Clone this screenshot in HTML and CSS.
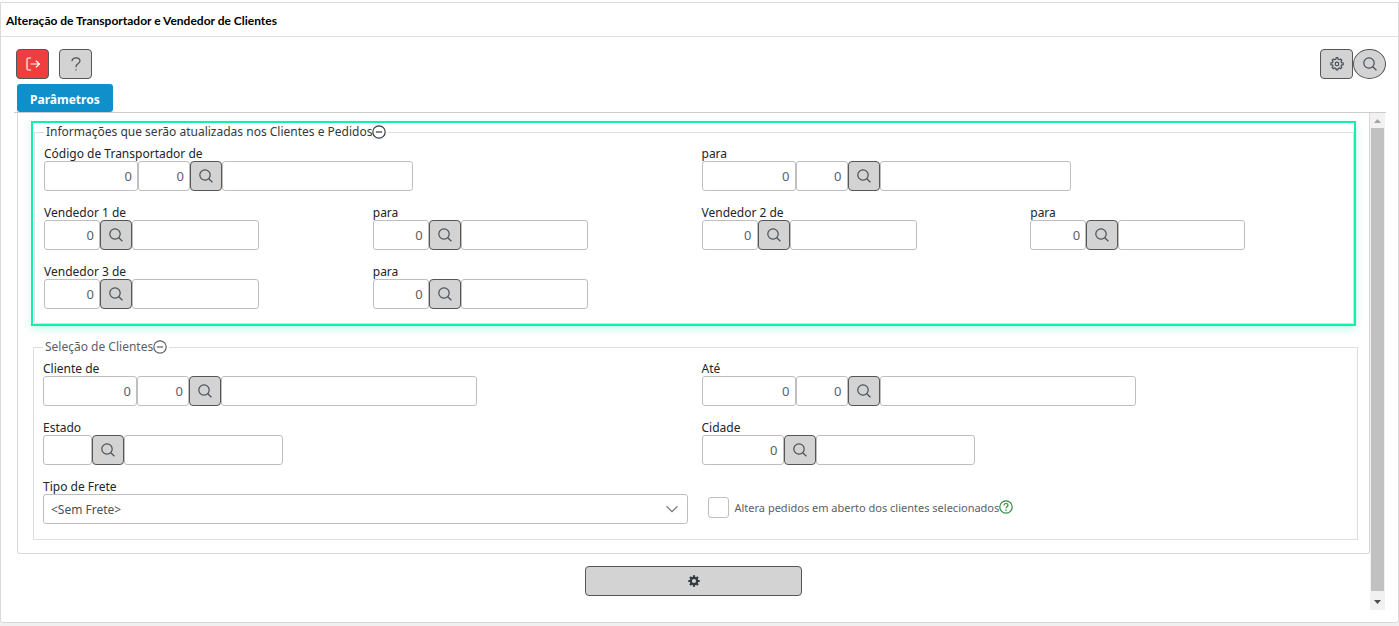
FILE: index.html
```html
<!DOCTYPE html>
<html lang="pt-BR">
<head>
    <meta charset="UTF-8">
    <meta name="viewport" content="width=device-width, initial-scale=1.0">
    <title>Alteração de Transportador e Vendedor de Clientes</title>
    <link rel="stylesheet" href="styles.css">
</head>
<body>

<svg class="sprite" aria-hidden="true">
    <symbol id="search" viewBox="0 0 14 14">
        <circle cx="6" cy="6" r="5.2"/>
        <path d="M9.8 9.8 13.4 13.3"/>
    </symbol>
    <symbol id="minus" viewBox="0 0 14 14">
        <circle cx="7" cy="7" r="6.2"/>
        <path d="M3.8 7h6.4"/>
    </symbol>
    <symbol id="gear" viewBox="0 0 14 14">
        <path d="M5.9 2.2 6.2.7h1.6l.3 1.5 1.2.5 1.3-.8 1.2 1.2-.8 1.3.5 1.2 1.7.3v1.8l-1.7.3-.5 1.2.8 1.3-1.2 1.2-1.3-.8-1.2.5-.3 1.4H6.2l-.3-1.4-1.2-.5-1.3.8-1.2-1.2.8-1.3L2.5 8 .8 7.7V5.9l1.7-.3L3 4.4l-.8-1.3 1.2-1.2 1.300.8z"/>
        <circle cx="7" cy="6.9" r="1.8"/>
    </symbol>
</svg>

<div class="window">
    <h1 class="title">Alteração de Transportador e Vendedor de Clientes</h1>

    <div class="toolbar">
        <button type="button" class="btn btn-exit" aria-label="Sair">
            <svg class="icon" viewBox="0 0 14 14"><path d="M5 1H2.2Q1 1 1 2.2v9.600Q1 13 2.200 13H5M4.600 7h8.600M9.900 3.600 13.300 7l-3.400 3.400"/></svg>
        </button>
        <button type="button" class="btn" aria-label="Ajuda">
            <svg class="icon icon-help" viewBox="0 0 10 14"><path d="M1 4.200C1 2 2.700.8 5 .8s4 1.300 4 3.200c0 2.600-4 2.700-4 5.400v.8"/><path d="M5 12.200v1.400"/></svg>
        </button>
        <div class="toolbar-right">
            <button type="button" class="btn" aria-label="Configurações"><svg class="icon"><use href="#gear"/></svg></button>
            <button type="button" class="btn btn-round" aria-label="Pesquisar"><svg class="icon"><use href="#search"/></svg></button>
        </div>
    </div>

    <div class="tabs">
        <button type="button" class="tab">Parâmetros</button>
    </div>

    <div class="scroll-area">
        <div class="content">
            <div class="panel">
                <div class="highlight">
                    <fieldset class="group">
                        <legend>Informações que serão atualizadas nos Clientes e Pedidos<svg class="icon"><use href="#minus"/></svg></legend>
                        <div class="grid">
                            <div class="field wide">
                                <label for="transp-de">Código de Transportador de</label>
                                <div class="inputs">
                                    <input type="text" id="transp-de" class="w-code" value="0">
                                    <input type="text" class="w-sub" value="0" aria-label="Filial do transportador de">
                                    <button type="button" class="btn btn-search" aria-label="Pesquisar"><svg class="icon"><use href="#search"/></svg></button>
                                    <input type="text" class="w-transp" aria-label="Nome do transportador de">
                                </div>
                            </div>
                            <div class="field wide">
                                <label for="transp-para">para</label>
                                <div class="inputs">
                                    <input type="text" id="transp-para" class="w-code" value="0">
                                    <input type="text" class="w-sub" value="0" aria-label="Filial do transportador para">
                                    <button type="button" class="btn btn-search" aria-label="Pesquisar"><svg class="icon"><use href="#search"/></svg></button>
                                    <input type="text" class="w-transp" aria-label="Nome do transportador para">
                                </div>
                            </div>
                            <div class="field">
                                <label for="vend1-de">Vendedor 1 de</label>
                                <div class="inputs">
                                    <input type="text" id="vend1-de" class="w-vend" value="0">
                                    <button type="button" class="btn btn-search" aria-label="Pesquisar"><svg class="icon"><use href="#search"/></svg></button>
                                    <input type="text" class="w-vend-name" aria-label="Nome do vendedor 1 de">
                                </div>
                            </div>
                            <div class="field">
                                <label for="vend1-para">para</label>
                                <div class="inputs">
                                    <input type="text" id="vend1-para" class="w-vend" value="0">
                                    <button type="button" class="btn btn-search" aria-label="Pesquisar"><svg class="icon"><use href="#search"/></svg></button>
                                    <input type="text" class="w-vend-name" aria-label="Nome do vendedor 1 para">
                                </div>
                            </div>
                            <div class="field">
                                <label for="vend2-de">Vendedor 2 de</label>
                                <div class="inputs">
                                    <input type="text" id="vend2-de" class="w-vend" value="0">
                                    <button type="button" class="btn btn-search" aria-label="Pesquisar"><svg class="icon"><use href="#search"/></svg></button>
                                    <input type="text" class="w-vend-name" aria-label="Nome do vendedor 2 de">
                                </div>
                            </div>
                            <div class="field">
                                <label for="vend2-para">para</label>
                                <div class="inputs">
                                    <input type="text" id="vend2-para" class="w-vend" value="0">
                                    <button type="button" class="btn btn-search" aria-label="Pesquisar"><svg class="icon"><use href="#search"/></svg></button>
                                    <input type="text" class="w-vend-name" aria-label="Nome do vendedor 2 para">
                                </div>
                            </div>
                            <div class="field">
                                <label for="vend3-de">Vendedor 3 de</label>
                                <div class="inputs">
                                    <input type="text" id="vend3-de" class="w-vend" value="0">
                                    <button type="button" class="btn btn-search" aria-label="Pesquisar"><svg class="icon"><use href="#search"/></svg></button>
                                    <input type="text" class="w-vend-name" aria-label="Nome do vendedor 3 de">
                                </div>
                            </div>
                            <div class="field">
                                <label for="vend3-para">para</label>
                                <div class="inputs">
                                    <input type="text" id="vend3-para" class="w-vend" value="0">
                                    <button type="button" class="btn btn-search" aria-label="Pesquisar"><svg class="icon"><use href="#search"/></svg></button>
                                    <input type="text" class="w-vend-name" aria-label="Nome do vendedor 3 para">
                                </div>
                            </div>
                        </div>
                    </fieldset>
                </div>

                <fieldset class="group group-clients">
                    <legend>Seleção de Clientes<svg class="icon"><use href="#minus"/></svg></legend>
                    <div class="grid">
                        <div class="field wide">
                            <label for="cliente-de">Cliente de</label>
                            <div class="inputs">
                                <input type="text" id="cliente-de" class="w-code" value="0">
                                <input type="text" class="w-sub" value="0" aria-label="Filial do cliente de">
                                <button type="button" class="btn btn-search" aria-label="Pesquisar"><svg class="icon"><use href="#search"/></svg></button>
                                <input type="text" class="w-client" aria-label="Nome do cliente de">
                            </div>
                        </div>
                        <div class="field wide">
                            <label for="cliente-ate">Até</label>
                            <div class="inputs">
                                <input type="text" id="cliente-ate" class="w-code" value="0">
                                <input type="text" class="w-sub" value="0" aria-label="Filial do cliente até">
                                <button type="button" class="btn btn-search" aria-label="Pesquisar"><svg class="icon"><use href="#search"/></svg></button>
                                <input type="text" class="w-client" aria-label="Nome do cliente até">
                            </div>
                        </div>
                        <div class="field wide">
                            <label for="estado">Estado</label>
                            <div class="inputs">
                                <input type="text" id="estado" class="w-state">
                                <button type="button" class="btn btn-search" aria-label="Pesquisar"><svg class="icon"><use href="#search"/></svg></button>
                                <input type="text" class="w-place" aria-label="Nome do estado">
                            </div>
                        </div>
                        <div class="field wide">
                            <label for="cidade">Cidade</label>
                            <div class="inputs">
                                <input type="text" id="cidade" class="w-city" value="0">
                                <button type="button" class="btn btn-search" aria-label="Pesquisar"><svg class="icon"><use href="#search"/></svg></button>
                                <input type="text" class="w-place" aria-label="Nome da cidade">
                            </div>
                        </div>
                        <div class="field wide">
                            <label for="frete">Tipo de Frete</label>
                            <div class="select">
                                <select id="frete">
                                    <option>&lt;Sem Frete&gt;</option>
                                </select>
                                <svg class="icon arrow" viewBox="0 0 14 14"><path d="M1.500 4.200 7 9.700l5.500-5.500"/></svg>
                            </div>
                        </div>
                        <div class="check wide">
                            <input type="checkbox" id="altera">
                            <label for="altera">Altera pedidos em aberto dos clientes selecionados</label>
                            <svg class="icon tip" viewBox="0 0 14 14"><circle cx="7" cy="7" r="6.200"/><path d="M5 5.400C5 4.200 5.900 3.500 7 3.500s2 .7 2 1.800C9 6.700 7 6.700 7 8.200M7 9.600V11"/></svg>
                        </div>
                    </div>
                </fieldset>
            </div>

            <button type="button" class="btn btn-run" aria-label="Processar">
                <svg class="icon icon-run" viewBox="0 0 14 14"><circle cx="7" cy="7" r="3.200"/><path d="M7 1.300v2M7 10.700v2M1.300 7h2M10.700 7h2M3 3l1.400 1.400M9.600 9.600 11 11M3 11l1.400-1.400M9.600 4.400 11 3"/></svg>
            </button>
        </div>

        <div class="scrollbar" aria-hidden="true">
            <svg class="scroll-arrow" viewBox="0 0 15 15"><path d="M4 10 7.500 6 11 10z" fill="#a3a3a3"/></svg>
            <div class="thumb"></div>
            <svg class="scroll-arrow" viewBox="0 0 15 15"><path d="M4 5h7L7.500 9z" fill="#505050"/></svg>
        </div>
    </div>
</div>

</body>
</html>
```
FILE: styles.css
```css
* {
    box-sizing: border-box;
}
body {
    margin: 0;
    border-top: 2px solid #fff;
    background-color: #f0f0f0;
    font-family: "Noto Sans", sans-serif;
    font-size: 12px;
    color: #212529;
}
.sprite {
    display: none;
}
.window {
    background-color: #fff;
    border: 1px solid #d9d9d9;
    border-radius: 0 0 3px 3px;
    padding-bottom: 12px;
}
.title {
    margin: 0;
    padding: 2px 5px 0;
    border-bottom: 1px solid #dedede;
    font-family: Lato, sans-serif;
    font-size: 12px;
    font-weight: 700;
    line-height: 31px;
    color: #000;
}

/* buttons and icons */
.icon {
    width: 14px;
    height: 14px;
    flex: none;
    fill: none;
    stroke: currentColor;
    stroke-width: 1.2;
}
.btn {
    display: flex;
    align-items: center;
    justify-content: center;
    width: 33px;
    height: 30px;
    padding: 0;
    border: 1px solid #55565b;
    border-radius: 4px;
    background-color: #d3d3d3;
    color: #495057;
    cursor: pointer;
}
.btn:hover {
    background-color: #c6c6c6;
}
.btn-exit {
    background-color: #f03e3e;
    color: #fff;
}
.btn-exit:hover {
    background-color: #d93636;
}
.icon-help {
    width: 10px;
}
.btn-round {
    border-radius: 50%;
}
.btn-search {
    width: 32px;
    flex: none;
}
.btn-run {
    width: 16%;
    margin: 12px auto 0;
    color: #343a40;
}
.icon-run {
    stroke-width: 2.2;
}

/* toolbar and tabs */
.toolbar {
    display: flex;
    gap: 10px;
    padding: 12px 12px 5px 15px;
}
.toolbar-right {
    display: flex;
    margin-left: auto;
}
.tabs {
    margin: 0 12px 0 13px;
    padding-left: 3px;
    border-bottom: 1px solid #ccc;
}
.tab {
    display: block;
    height: 28px;
    padding: 2px 13px 0;
    border: none;
    border-radius: 3px;
    background-color: #1090cb;
    color: #fff;
    font-family: inherit;
    font-size: 12px;
    font-weight: 700;
}

/* scrolled content */
.scroll-area {
    display: flex;
    margin: 0 13px 0 16px;
}
.content {
    flex: 1;
    padding-bottom: 14px;
}
.panel {
    padding: 8px 11px 13px 13px;
    border: 1px solid #d9d9d9;
    border-top: none;
    border-radius: 0 0 3px 3px;
}
.scrollbar {
    display: flex;
    flex-direction: column;
    width: 15px;
    background-color: #f1f1f1;
}
.scroll-arrow {
    width: 15px;
    height: 15px;
}
.thumb {
    flex: 1;
    margin: 0 1px 4px 1px;
    background-color: #c1c1c1;
}

/* field groups */
.highlight {
    margin-right: 2px;
    padding: 1px 0 0 1px;
    border: 2px solid #12efac;
    box-shadow: 0 3px 8px rgba(18, 239, 172, 0.25);
}
.group {
    margin: 0;
    min-width: 0;
    padding: 6px 8px 14px 9px;
    border: 1px solid #dedede;
}
.group-clients {
    margin: 13px 0 0 2px;
    padding: 6px 11px 15px 9px;
}
.group legend {
    display: flex;
    align-items: center;
    height: 16px;
    padding: 0 2px;
    line-height: 16px;
    color: #343a40;
}
.group-clients legend {
    color: #5c6066;
}
.grid {
    display: grid;
    grid-template-columns: repeat(4, 1fr);
    gap: 14px;
}
.wide {
    grid-column: span 2;
}
.field label {
    display: block;
    height: 15px;
    line-height: 15px;
}
.inputs {
    display: flex;
}
.inputs input {
    height: 30px;
    min-width: 0;
    padding: 0 5px;
    border: 1px solid #bfbfbf;
    border-radius: 3px;
    background-color: #fff;
    font-family: inherit;
    font-size: 13px;
    color: #5c6066;
    text-align: right;
}
.inputs .w-code {
    width: 94px;
}
.inputs .w-sub {
    width: 52px;
}
.inputs .w-transp {
    width: 191px;
}
.inputs .w-vend {
    width: 56px;
}
.inputs .w-vend-name {
    width: 127px;
}
.inputs .w-client {
    width: 256px;
}
.inputs .w-state {
    width: 49px;
}
.inputs .w-city {
    width: 82px;
}
.inputs .w-place {
    width: 159px;
}
.select {
    position: relative;
}
.select select {
    display: block;
    width: 100%;
    height: 30px;
    padding: 0 7px;
    border: 1px solid #bfbfbf;
    border-radius: 3px;
    background-color: #fff;
    appearance: none;
    font-family: inherit;
    font-size: 12px;
    color: #495057;
}
.select .arrow {
    position: absolute;
    top: 8px;
    right: 9px;
    color: #6c757d;
    pointer-events: none;
}
.check {
    display: flex;
    align-items: center;
    padding: 11px 0 0 6px;
    color: #5c6066;
    font-size: 11px;
}
.check input {
    appearance: none;
    width: 21px;
    height: 21px;
    margin: 0 6px 0 0;
    border: 1px solid #bfbfbf;
    border-radius: 3px;
    background-color: #fff;
}
.check .tip {
    color: #2e8b3d;
}
```
